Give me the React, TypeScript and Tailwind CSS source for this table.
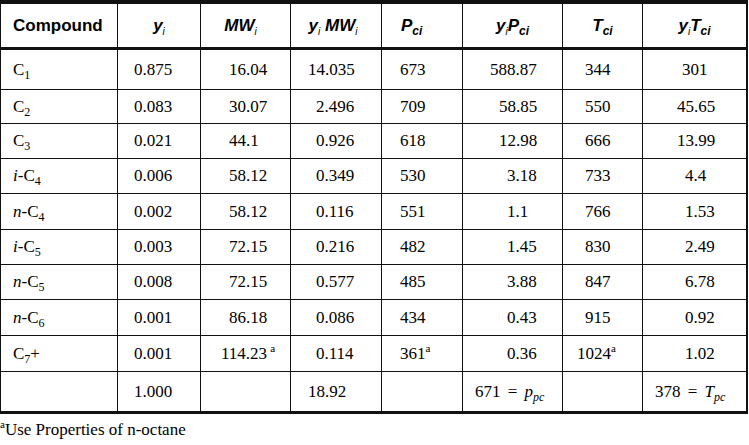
import React from "react";

type Cell = { c: React.ReactNode; cls: string };

const GRID =
  "grid grid-cols-[117px_83px_90px_91px_81px_100px_80px_103px]";

const Sub = ({ children }: { children: React.ReactNode }) => (
  <span className="text-[12px] align-[-4px] leading-none">{children}</span>
);

const Sup = ({ children }: { children: React.ReactNode }) => (
  <span className="text-[11px] align-[7px] leading-none">{children}</span>
);

const HSub = ({ children, bold }: { children: React.ReactNode; bold?: boolean }) => (
  <span
    className={
      bold
        ? "text-[12px] font-bold italic align-[-4px] leading-none"
        : "text-[10px] font-normal italic align-[-4px] leading-none"
    }
  >
    {children}
  </span>
);

const C = (n: string, prefix?: string) => (
  <span>
    {prefix ? (
      <>
        <i>{prefix}</i>-
      </>
    ) : null}
    C<Sub>{n}</Sub>
  </span>
);

const Eq = ({ v, sym }: { v: string; sym: string }) => (
  <span>
    {v} <span className="mx-[3px]">=</span> <i>{sym}</i>
    <span className="text-[12px] italic align-[-4px] leading-none">pc</span>
  </span>
);

const rows: { h: string; cells: Cell[] }[] = [
  {
    h: "h-[40px] border-b border-[#111]",
    cells: [
      { c: C("1"), cls: "pl-[12px]" },
      { c: "0.875", cls: "pl-[16px]" },
      { c: "16.04", cls: "pl-[28px]" },
      { c: "14.035", cls: "pl-[17px]" },
      { c: "673", cls: "pl-[18px]" },
      { c: "588.87", cls: "pl-[27px]" },
      { c: "344", cls: "pl-[22px]" },
      { c: "301", cls: "pl-[39px]" },
    ],
  },
  {
    h: "h-[34px] border-b border-[#111]",
    cells: [
      { c: C("2"), cls: "pl-[12px]" },
      { c: "0.083", cls: "pl-[16px]" },
      { c: "30.07", cls: "pl-[28px]" },
      { c: "2.496", cls: "pl-[25px]" },
      { c: "709", cls: "pl-[18px]" },
      { c: "58.85", cls: "pl-[36px]" },
      { c: "550", cls: "pl-[22px]" },
      { c: "45.65", cls: "pl-[34px]" },
    ],
  },
  {
    h: "h-[35px] border-b border-[#111]",
    cells: [
      { c: C("3"), cls: "pl-[12px]" },
      { c: "0.021", cls: "pl-[16px]" },
      { c: "44.1", cls: "pl-[28px]" },
      { c: "0.926", cls: "pl-[25px]" },
      { c: "618", cls: "pl-[18px]" },
      { c: "12.98", cls: "pl-[36px]" },
      { c: "666", cls: "pl-[22px]" },
      { c: "13.99", cls: "pl-[34px]" },
    ],
  },
  {
    h: "h-[35px] border-b border-[#111]",
    cells: [
      { c: C("4", "i"), cls: "pl-[12px]" },
      { c: "0.006", cls: "pl-[16px]" },
      { c: "58.12", cls: "pl-[28px]" },
      { c: "0.349", cls: "pl-[25px]" },
      { c: "530", cls: "pl-[18px]" },
      { c: "3.18", cls: "pl-[44px]" },
      { c: "733", cls: "pl-[22px]" },
      { c: "4.4", cls: "pl-[42px]" },
    ],
  },
  {
    h: "h-[36px] border-b border-[#111]",
    cells: [
      { c: C("4", "n"), cls: "pl-[12px]" },
      { c: "0.002", cls: "pl-[16px]" },
      { c: "58.12", cls: "pl-[28px]" },
      { c: "0.116", cls: "pl-[25px]" },
      { c: "551", cls: "pl-[18px]" },
      { c: "1.1", cls: "pl-[44px]" },
      { c: "766", cls: "pl-[22px]" },
      { c: "1.53", cls: "pl-[42px]" },
    ],
  },
  {
    h: "h-[35px] border-b border-[#111]",
    cells: [
      { c: C("5", "i"), cls: "pl-[12px]" },
      { c: "0.003", cls: "pl-[16px]" },
      { c: "72.15", cls: "pl-[28px]" },
      { c: "0.216", cls: "pl-[25px]" },
      { c: "482", cls: "pl-[18px]" },
      { c: "1.45", cls: "pl-[44px]" },
      { c: "830", cls: "pl-[22px]" },
      { c: "2.49", cls: "pl-[42px]" },
    ],
  },
  {
    h: "h-[35px] border-b border-[#111]",
    cells: [
      { c: C("5", "n"), cls: "pl-[12px]" },
      { c: "0.008", cls: "pl-[16px]" },
      { c: "72.15", cls: "pl-[28px]" },
      { c: "0.577", cls: "pl-[25px]" },
      { c: "485", cls: "pl-[18px]" },
      { c: "3.88", cls: "pl-[44px]" },
      { c: "847", cls: "pl-[22px]" },
      { c: "6.78", cls: "pl-[42px]" },
    ],
  },
  {
    h: "h-[36px] border-b border-[#111]",
    cells: [
      { c: C("6", "n"), cls: "pl-[12px]" },
      { c: "0.001", cls: "pl-[16px]" },
      { c: "86.18", cls: "pl-[28px]" },
      { c: "0.086", cls: "pl-[25px]" },
      { c: "434", cls: "pl-[18px]" },
      { c: "0.43", cls: "pl-[44px]" },
      { c: "915", cls: "pl-[22px]" },
      { c: "0.92", cls: "pl-[42px]" },
    ],
  },
  {
    h: "h-[36px] border-b border-[#111]",
    cells: [
      {
        c: (
          <span>
            C<Sub>7</Sub>+
          </span>
        ),
        cls: "pl-[12px]",
      },
      { c: "0.001", cls: "pl-[16px]" },
      {
        c: (
          <span>
            114.23<span className="ml-[3px]" /><Sup>a</Sup>
          </span>
        ),
        cls: "pl-[20px]",
      },
      { c: "0.114", cls: "pl-[25px]" },
      {
        c: (
          <span>
            361<Sup>a</Sup>
          </span>
        ),
        cls: "pl-[18px]",
      },
      { c: "0.36", cls: "pl-[44px]" },
      {
        c: (
          <span>
            1024<Sup>a</Sup>
          </span>
        ),
        cls: "pl-[14px]",
      },
      { c: "1.02", cls: "pl-[42px]" },
    ],
  },
  {
    h: "h-[42px] border-b-[3px] border-[#111]",
    cells: [
      { c: "", cls: "" },
      { c: "1.000", cls: "pl-[16px]" },
      { c: "", cls: "" },
      { c: "18.92", cls: "pl-[17px]" },
      { c: "", cls: "" },
      { c: <Eq v="671" sym="p" />, cls: "pl-[12px]" },
      { c: "", cls: "" },
      { c: <Eq v="378" sym="T" />, cls: "pl-[12px]" },
    ],
  },
];

const headers: Cell[] = [
  { c: "Compound", cls: "pl-[12px] justify-start" },
  {
    c: (
      <span>
        <i>y</i>
        <HSub>i</HSub>
      </span>
    ),
    cls: "justify-center",
  },
  {
    c: (
      <span>
        <i>MW</i>
        <HSub>i</HSub>
      </span>
    ),
    cls: "justify-center pr-[10px]",
  },
  {
    c: (
      <span>
        <i>y</i>
        <HSub>i</HSub> <i>MW</i>
        <HSub>i</HSub>
      </span>
    ),
    cls: "justify-center pr-[6px]",
  },
  {
    c: (
      <span>
        <i>P</i>
        <HSub bold>ci</HSub>
      </span>
    ),
    cls: "justify-start pl-[19px]",
  },
  {
    c: (
      <span>
        <i>y</i>
        <HSub>i</HSub>
        <i>P</i>
        <HSub bold>ci</HSub>
      </span>
    ),
    cls: "justify-center",
  },
  {
    c: (
      <span>
        <i>T</i>
        <HSub bold>ci</HSub>
      </span>
    ),
    cls: "justify-center",
  },
  {
    c: (
      <span>
        <i>y</i>
        <HSub>i</HSub>
        <i>T</i>
        <HSub bold>ci</HSub>
      </span>
    ),
    cls: "justify-center",
  },
];

export default function App() {
  return (
    <div className="w-[749px] h-[445px] bg-white text-black overflow-hidden">
      <div className="w-[748px] border-t-[4px] border-l border-r-2 border-[#111]">
        <div
          className={`${GRID} h-[46px] border-b-[3px] border-[#111] font-['Liberation_Sans',Arial,sans-serif] font-bold text-[17px]`}
        >
          {headers.map((h, i) => (
            <div
              key={i}
              className={`flex items-center ${i < 7 ? "border-r border-[#111]" : ""} ${h.cls}`}
            >
              {h.c}
            </div>
          ))}
        </div>
        {rows.map((r, ri) => (
          <div
            key={ri}
            className={`${GRID} ${r.h} font-['Liberation_Serif','Times_New_Roman',serif] text-[17px]`}
          >
            {r.cells.map((cell, ci) => (
              <div
                key={ci}
                className={`flex items-center whitespace-nowrap ${ci < 7 ? "border-r border-[#111]" : ""} ${cell.cls}`}
              >
                {cell.c}
              </div>
            ))}
          </div>
        ))}
      </div>
      <div className="pt-[5px] font-['Liberation_Serif','Times_New_Roman',serif] text-[17px] leading-[20px]">
        <Sup>a</Sup>Use Properties of n-octane
      </div>
    </div>
  );
}
